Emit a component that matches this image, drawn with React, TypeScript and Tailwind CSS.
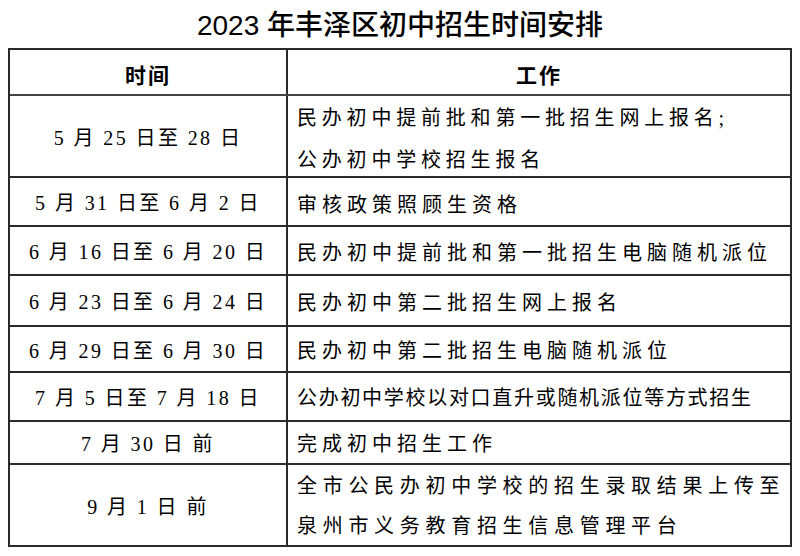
import React from "react";

type Row = {
  date: string;
  work: string[];
  h: string;
  wcls: string;
};

const rows: Row[] = [
  {
    date: "5 月 25 日至 28 日",
    work: ["民办初中提前批和第一批招生网上报名;", "公办初中学校招生报名"],
    h: "h-[82px]",
    wcls: "tracking-[4.8px] gap-[22px] pt-[6px]",
  },
  {
    date: "5 月 31 日至 6 月 2 日",
    work: ["审核政策照顾生资格"],
    h: "h-[49px]",
    wcls: "tracking-[5px] pt-[6px]",
  },
  {
    date: "6 月 16 日至 6 月 20 日",
    work: ["民办初中提前批和第一批招生电脑随机派位"],
    h: "h-[49px]",
    wcls: "tracking-[5px] pt-[4px]",
  },
  {
    date: "6 月 23 日至 6 月 24 日",
    work: ["民办初中第二批招生网上报名"],
    h: "h-[51px]",
    wcls: "tracking-[5px] pt-[4px]",
  },
  {
    date: "6 月 29 日至 6 月 30 日",
    work: ["民办初中第二批招生电脑随机派位"],
    h: "h-[46px]",
    wcls: "tracking-[5px] pt-[4px]",
  },
  {
    date: "7 月 5 日至 7 月 18 日",
    work: ["公办初中学校以对口直升或随机派位等方式招生"],
    h: "h-[49px]",
    wcls: "tracking-[1.7px] pt-[2px]",
  },
  {
    date: "7 月 30 日 前",
    work: ["完成初中招生工作"],
    h: "h-[43px]",
    wcls: "tracking-[5px] pt-[2px]",
  },
  {
    date: "9 月 1 日 前",
    work: ["全市公民办初中学校的招生录取结果上传至", "泉州市义务教育招生信息管理平台"],
    h: "h-[84px] border-b-2",
    wcls: "tracking-[5.7px] gap-[20px] pt-[2px]",
  },
];

export default function App() {
  return (
    <div className="w-[800px] h-[556px] bg-white text-black overflow-hidden">
      <div className="h-[48px] flex items-center justify-center pt-[4px] font-['Liberation_Sans','Noto_Sans_CJK_SC',sans-serif] text-[28px] font-medium leading-none">
        2023 年丰泽区初中招生时间安排
      </div>
      <div className="ml-[8px] w-[784px] border-x-2 border-[#2a2a2a] font-['Liberation_Serif','Noto_Sans_CJK_SC',serif] text-[20px] leading-none">
        <div className="flex h-[46px] border-t-2 border-[#2a2a2a]">
          <div className="w-[278px] shrink-0 border-r-2 border-[#2a2a2a] flex items-center justify-center pt-[4px] font-['Noto_Sans_CJK_SC',sans-serif] font-bold text-[21px] tracking-[2px]">
            时间
          </div>
          <div className="flex-1 flex items-center justify-center pt-[4px] font-['Noto_Sans_CJK_SC',sans-serif] font-bold text-[21px] tracking-[2px]">
            工作
          </div>
        </div>
        {rows.map((r, i) => (
          <div
            key={i}
            className={`flex border-t-2 ${i === 0 ? "border-t-[#444]" : ""} border-[#2a2a2a] ${r.h}`}
          >
            <div className="w-[278px] shrink-0 border-r-2 border-[#2a2a2a] flex items-center justify-center pt-[3px] tracking-[2.4px] whitespace-pre">
              {r.date}
            </div>
            <div
              className={`flex-1 flex flex-col justify-center pl-[9px] whitespace-nowrap ${r.wcls}`}
            >
              {r.work.map((w, j) => (
                <div key={j}>{w}</div>
              ))}
            </div>
          </div>
        ))}
      </div>
    </div>
  );
}
